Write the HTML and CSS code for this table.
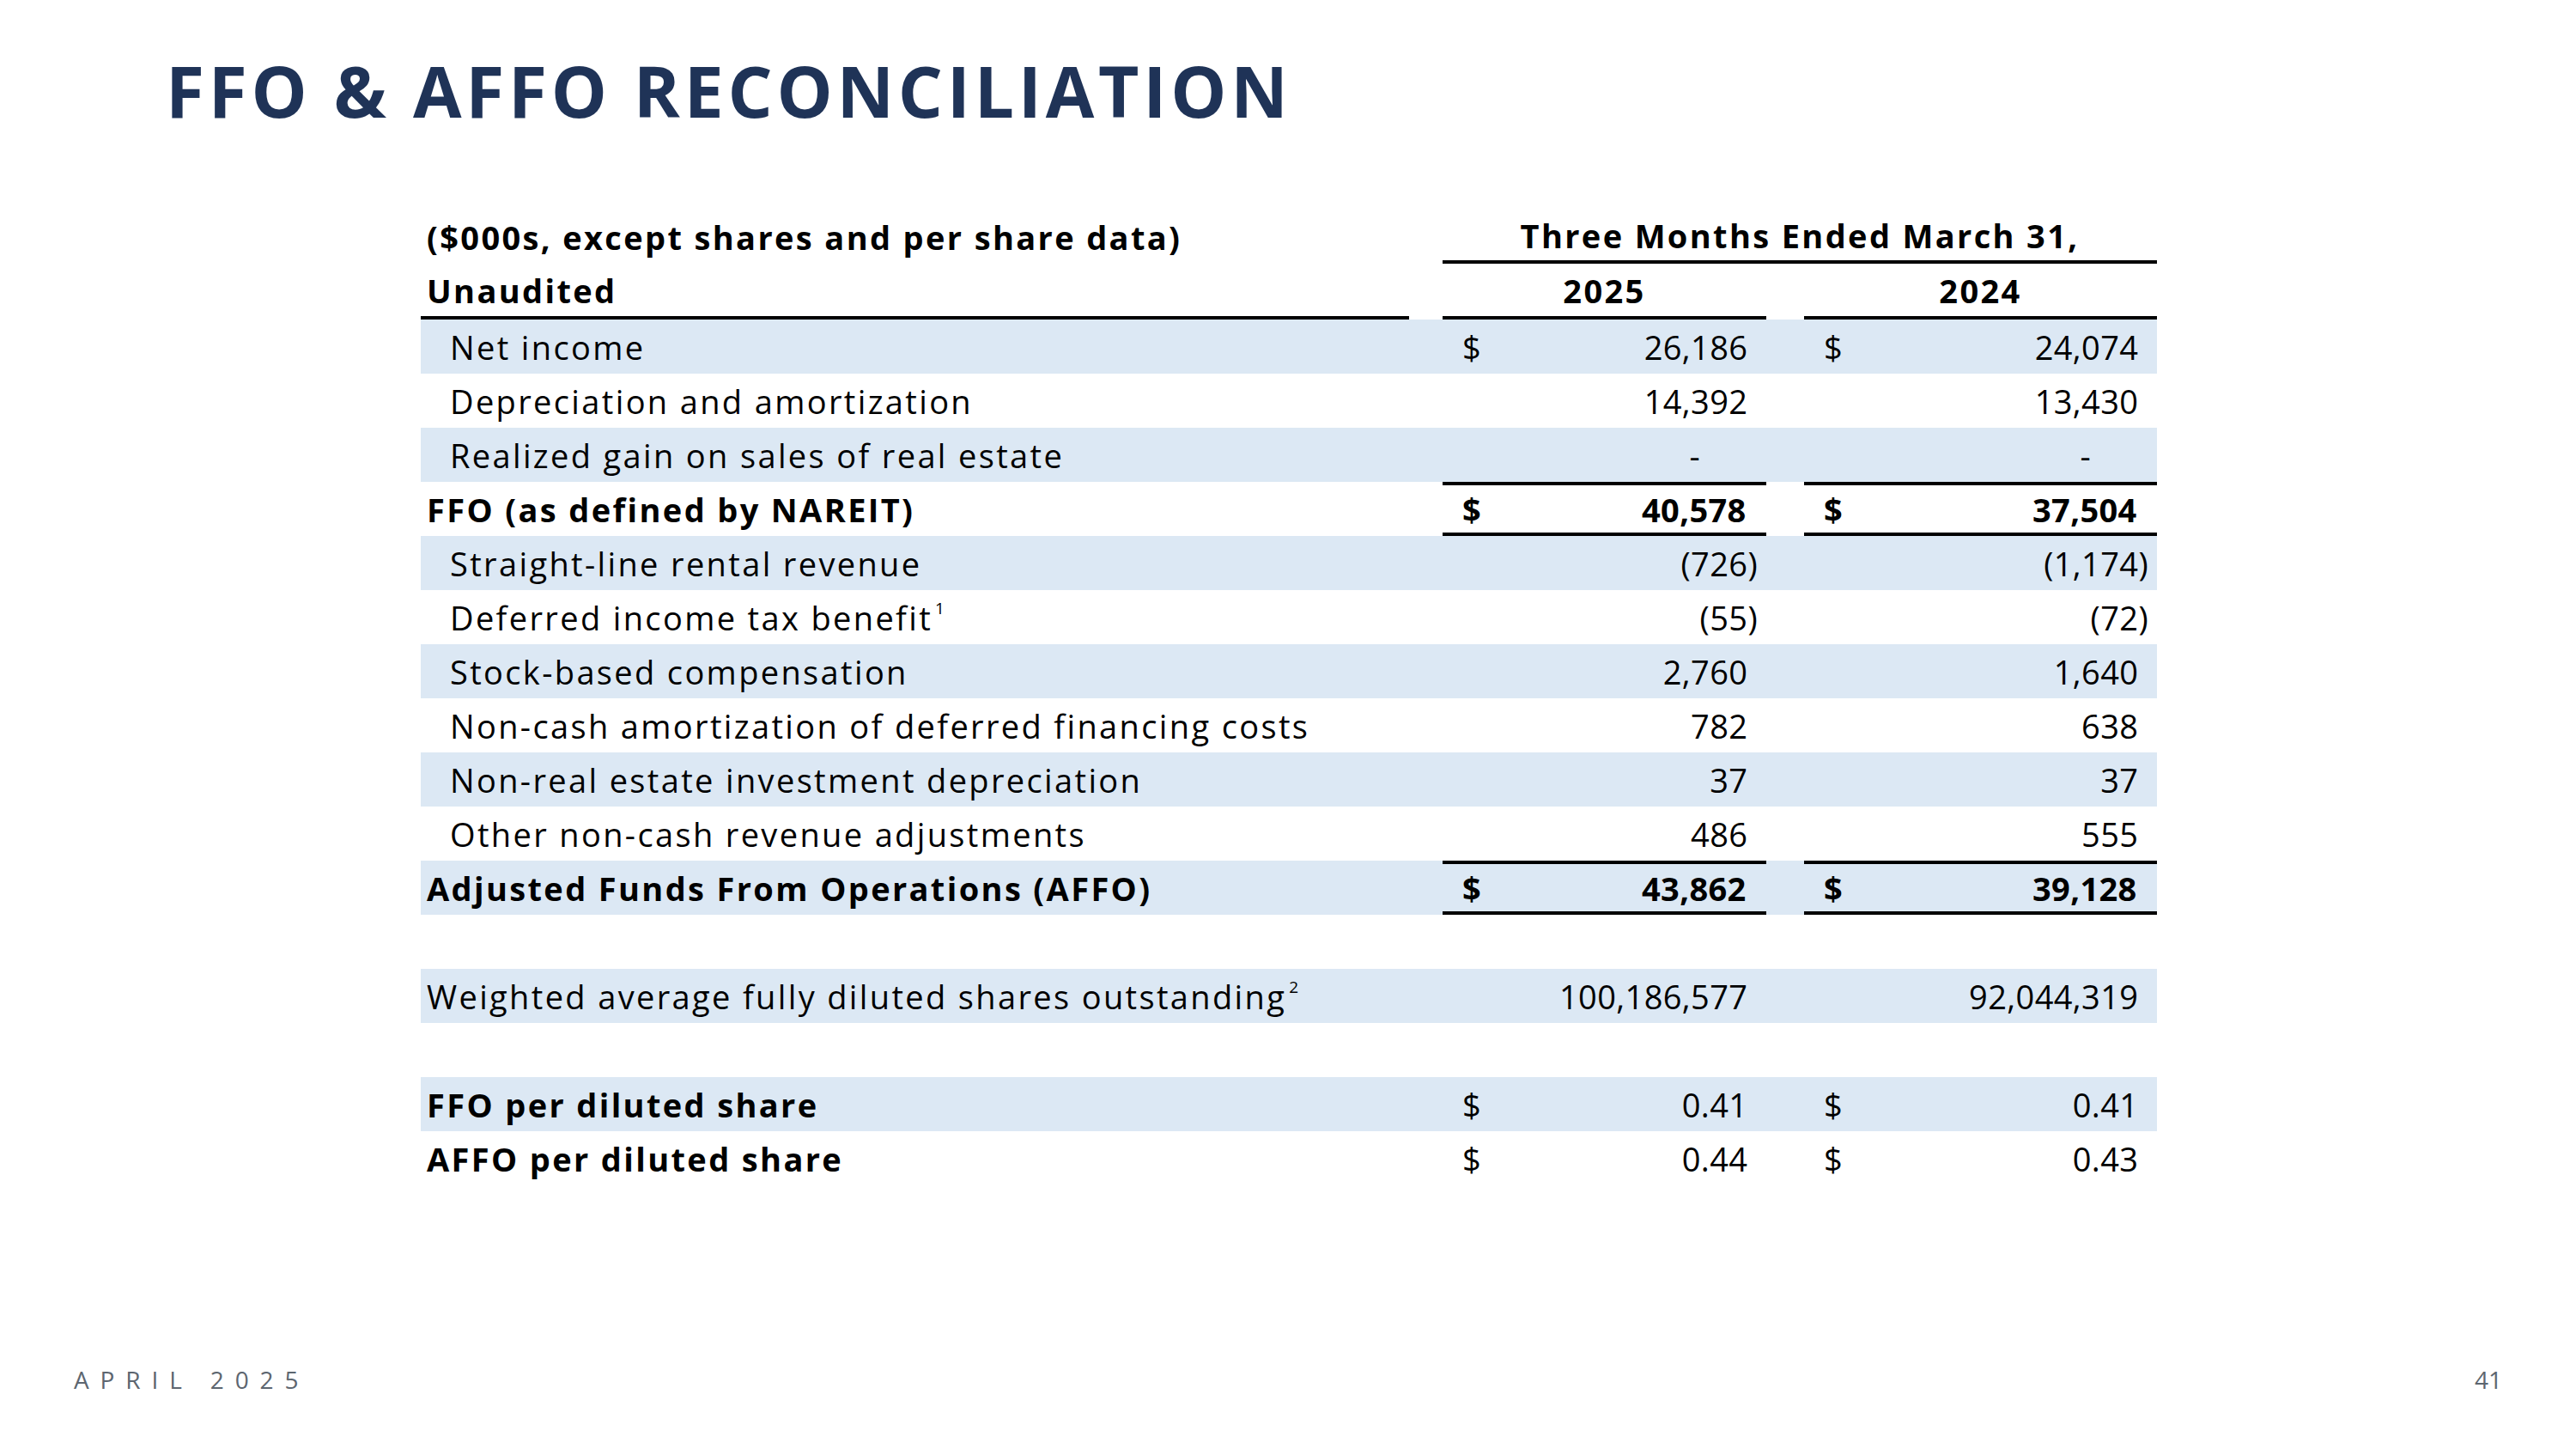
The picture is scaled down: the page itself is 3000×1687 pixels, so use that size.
FILE: index.html
```html
<!DOCTYPE html>
<html lang="en">
<head>
<meta charset="utf-8">
<title>FFO &amp; AFFO Reconciliation</title>
<link rel="stylesheet" href="styles.css">
</head>
<body>
<div class="slide">
  <h1 class="title">FFO &amp; AFFO RECONCILIATION</h1>

  <div class="table">
    <div class="row head1">
      <div class="lbl bold">($000s, except shares and per share data)</div>
      <div class="gap"></div>
      <div class="span3 bold ruled-b">Three Months Ended March 31,</div>
    </div>
    <div class="row head2">
      <div class="lbl bold ruled-b">Unaudited</div>
      <div class="gap"></div>
      <div class="yr bold ruled-b">2025</div>
      <div class="gap"></div>
      <div class="yr bold ruled-b">2024</div>
    </div>

    <div class="row band">
      <div class="lbl ind">Net income</div><div class="gap"></div>
      <div class="val"><span>$</span><span class="num">26,186</span></div><div class="gap"></div>
      <div class="val"><span>$</span><span class="num">24,074</span></div>
    </div>
    <div class="row">
      <div class="lbl ind">Depreciation and amortization</div><div class="gap"></div>
      <div class="val"><span></span><span class="num">14,392</span></div><div class="gap"></div>
      <div class="val"><span></span><span class="num">13,430</span></div>
    </div>
    <div class="row band">
      <div class="lbl ind">Realized gain on sales of real estate</div><div class="gap"></div>
      <div class="val"><span></span><span class="dash">-</span></div><div class="gap"></div>
      <div class="val"><span></span><span class="dash">-</span></div>
    </div>
    <div class="row total">
      <div class="lbl bold">FFO (as defined by NAREIT)</div><div class="gap"></div>
      <div class="val bold ruled-tb"><span>$</span><span class="num">40,578</span></div><div class="gap"></div>
      <div class="val bold ruled-tb"><span>$</span><span class="num">37,504</span></div>
    </div>
    <div class="row band">
      <div class="lbl ind">Straight-line rental revenue</div><div class="gap"></div>
      <div class="val"><span></span><span class="neg">(726)</span></div><div class="gap"></div>
      <div class="val"><span></span><span class="neg">(1,174)</span></div>
    </div>
    <div class="row">
      <div class="lbl ind"><span>Deferred income tax benefit<sup>1</sup></span></div><div class="gap"></div>
      <div class="val"><span></span><span class="neg">(55)</span></div><div class="gap"></div>
      <div class="val"><span></span><span class="neg">(72)</span></div>
    </div>
    <div class="row band">
      <div class="lbl ind">Stock-based compensation</div><div class="gap"></div>
      <div class="val"><span></span><span class="num">2,760</span></div><div class="gap"></div>
      <div class="val"><span></span><span class="num">1,640</span></div>
    </div>
    <div class="row">
      <div class="lbl ind">Non-cash amortization of deferred financing costs</div><div class="gap"></div>
      <div class="val"><span></span><span class="num">782</span></div><div class="gap"></div>
      <div class="val"><span></span><span class="num">638</span></div>
    </div>
    <div class="row band">
      <div class="lbl ind">Non-real estate investment depreciation</div><div class="gap"></div>
      <div class="val"><span></span><span class="num">37</span></div><div class="gap"></div>
      <div class="val"><span></span><span class="num">37</span></div>
    </div>
    <div class="row">
      <div class="lbl ind">Other non-cash revenue adjustments</div><div class="gap"></div>
      <div class="val"><span></span><span class="num">486</span></div><div class="gap"></div>
      <div class="val"><span></span><span class="num">555</span></div>
    </div>
    <div class="row band total">
      <div class="lbl bold">Adjusted Funds From Operations (AFFO)</div><div class="gap"></div>
      <div class="val bold ruled-tb"><span>$</span><span class="num">43,862</span></div><div class="gap"></div>
      <div class="val bold ruled-tb"><span>$</span><span class="num">39,128</span></div>
    </div>
    <div class="row empty"></div>
    <div class="row band">
      <div class="lbl"><span>Weighted average fully diluted shares outstanding<sup>2</sup></span></div><div class="gap"></div>
      <div class="val"><span></span><span class="num">100,186,577</span></div><div class="gap"></div>
      <div class="val"><span></span><span class="num">92,044,319</span></div>
    </div>
    <div class="row empty"></div>
    <div class="row band">
      <div class="lbl bold">FFO per diluted share</div><div class="gap"></div>
      <div class="val"><span>$</span><span class="num">0.41</span></div><div class="gap"></div>
      <div class="val"><span>$</span><span class="num">0.41</span></div>
    </div>
    <div class="row">
      <div class="lbl bold">AFFO per diluted share</div><div class="gap"></div>
      <div class="val"><span>$</span><span class="num">0.44</span></div><div class="gap"></div>
      <div class="val"><span>$</span><span class="num">0.43</span></div>
    </div>
  </div>

  <div class="footer">
    <span class="date">APRIL 2025</span>
    <span class="page">41</span>
  </div>
</div>
</body>
</html>
```

FILE: styles.css
```css
* { box-sizing: border-box; }

html, body {
  margin: 0;
  padding: 0;
  background: #ffffff;
}

body {
  font-family: "Open Sans", "DejaVu Sans", sans-serif;
  color: #000000;
}

.slide {
  width: 3000px;
  height: 1687px;
  display: flex;
  flex-direction: column;
  overflow: hidden;
}

.title {
  margin: 64px 0 0 193px;
  font-size: 82px;
  line-height: 1;
  font-weight: 700;
  letter-spacing: 0.058em;
  color: #1f3357;
}

.table {
  margin: 98px 0 0 490px;
  width: 2022px;
  font-size: 38px;
}

.row {
  display: grid;
  grid-template-columns: 1151px 39px 377px 44px 411px;
  height: 63px;
  align-items: stretch;
}

.row.head2 { height: 65px; }

.band { background: #dce8f4; }

.lbl, .yr, .span3, .val {
  display: flex;
  align-items: center;
  white-space: nowrap;
}

.lbl, .yr, .span3 { letter-spacing: 0.062em; }

.lbl { padding-left: 7px; }
.lbl.ind { padding-left: 34px; }

.bold { font-weight: 700; }

.span3 {
  grid-column: 3 / 6;
  justify-content: center;
}

.yr { justify-content: center; }

.ruled-b { border-bottom: 4px solid #000; }
.ruled-tb {
  border-top: 4px solid #000;
  border-bottom: 4px solid #000;
}

.val {
  justify-content: space-between;
  padding: 0 10px 0 23px;
  letter-spacing: 0.01em;
}

.num::after {
  content: ")";
  visibility: hidden;
}

.dash { margin-right: 11px; }
.dash::after {
  content: "00)";
  visibility: hidden;
}

sup {
  font-size: 0.5em;
  line-height: 0;
  vertical-align: 0.95em;
  margin-left: 3px;
  letter-spacing: 0;
}

.footer {
  margin-top: auto;
  height: 95px;
  padding: 0 86px;
  display: flex;
  justify-content: space-between;
  align-items: flex-start;
  color: #5d6670;
  font-size: 28px;
  line-height: 1;
}

.date {
  letter-spacing: 0.46em;
}
```
